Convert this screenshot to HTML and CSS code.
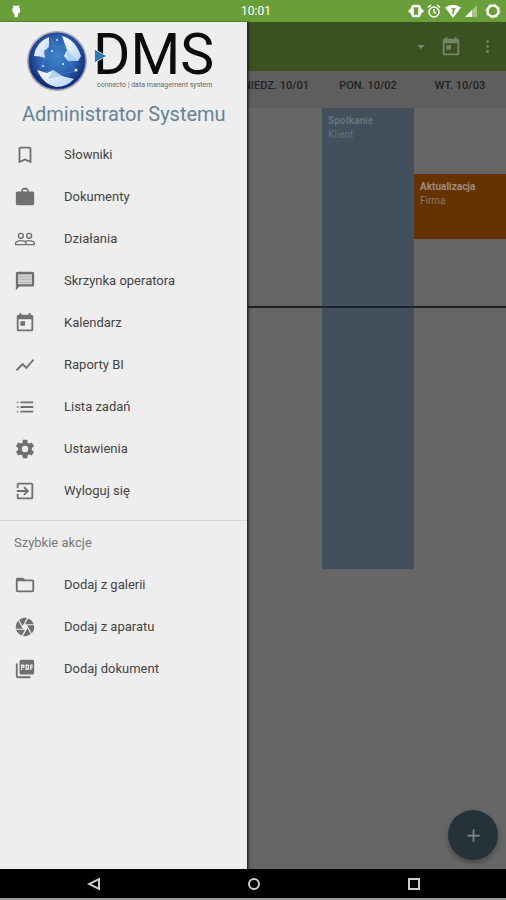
FILE: index.html
```html
<!DOCTYPE html>
<html lang="pl">
<head>
<meta charset="utf-8">
<meta name="viewport" content="width=device-width, initial-scale=1">
<title>DMS</title>
<link rel="stylesheet" href="styles.css">
</head>
<body>
<header class="status">
  <svg class="status-app" viewBox="0 0 12 16" aria-hidden="true"><path d="M3 3l-1-2 2 1h4l2-1-1 2q2 2 1.500 5Q10 11 8 11v4H4v-4Q2 11 1.500 8 1 5 3 3z"/></svg>
  <time class="clock">10:01</time>
  <div class="status-icons">
    <svg viewBox="0 0 16 16" aria-hidden="true"><rect x="4.500" y="3" width="7" height="10" rx="1" fill="none" stroke="#fff" stroke-width="2.500"/><path d="M4 4v8L0 8zM12 4v8l4-4z"/></svg>
    <svg viewBox="0 0 16 16" aria-hidden="true"><g fill="none" stroke="#fff" stroke-width="1.500"><circle cx="8" cy="9" r="5"/><path d="M8 6v3l2 1.500M2 4.500l3-2.500M14 4.500l-3-2.500"/></g></svg>
    <svg class="wifi" viewBox="0 0 18 16" aria-hidden="true"><path d="M1 4.500Q9-1 17 4.500L9 15z"/><path d="M7.500 6h3L9 8.500V11" fill="none" stroke="#689f38" stroke-width="1.500"/></svg>
    <svg viewBox="0 0 14 16" aria-hidden="true"><path d="M13 2v12H1z" opacity=".4"/><path d="M8 7v7H1z"/></svg>
    <svg class="ring" viewBox="0 0 16 16" aria-hidden="true"><circle cx="8" cy="8" r="5.500" fill="none" stroke="#fff" stroke-width="2.500"/><circle cx="8" cy="8" r="7" fill="none" stroke="#fff" stroke-width="1" stroke-dasharray="3 2.500" opacity=".6"/></svg>
  </div>
</header>

<div class="stage">
  <main class="calendar">
    <div class="toolbar">
      <button class="tool caret" aria-label="Widok"><svg viewBox="0 0 10 6"><path d="M1 1h8L5 5z"/></svg></button>
      <button class="tool" aria-label="Dzisiaj"><svg class="today" viewBox="0 0 24 24"><path d="M19 3h-1V1h-2v2H8V1H6v2H5a2 2 0 0 0-2 2v14a2 2 0 0 0 2 2h14a2 2 0 0 0 2-2V5a2 2 0 0 0-2-2zm0 16H5V8h14v11zM7 10h5v5H7z"/></svg></button>
      <button class="tool" aria-label="Menu"><svg class="more" viewBox="0 0 24 24"><circle cx="12" cy="5" r="2"/><circle cx="12" cy="12" r="2"/><circle cx="12" cy="19" r="2"/></svg></button>
    </div>
    <div class="days">
      <div class="day sunday">NIEDZ. 10/01</div>
      <div class="day">PON. 10/02</div>
      <div class="day">WT. 10/03</div>
    </div>
    <div class="slots">
      <article class="event meeting"><strong>Spotkanie</strong><span>Klient</span></article>
      <article class="event update"><strong>Aktualizacja</strong><span>Firma</span></article>
      <div class="now"></div>
    </div>
    <button class="fab" aria-label="Dodaj"><svg viewBox="0 0 24 24"><path d="M19 13h-6v6h-2v-6H5v-2h6V5h2v6h6z"/></svg></button>
  </main>

  <aside class="drawer">
    <div class="brand">
      <svg class="globe" viewBox="0 0 62 62" aria-hidden="true">
        <defs>
          <radialGradient id="sea" cx=".5" cy=".42" r=".58"><stop offset="0" stop-color="#3f86cb"/><stop offset=".6" stop-color="#2a5fae"/><stop offset="1" stop-color="#10206e"/></radialGradient>
          <linearGradient id="pane" x1="0" y1="0" x2="1" y2="1"><stop offset="0" stop-color="#fff"/><stop offset="1" stop-color="#b4d5f0"/></linearGradient>
        </defs>
        <circle cx="31" cy="31" r="30" fill="#a8a9b5"/>
        <circle cx="31" cy="31" r="28" fill="url(#sea)" stroke="#243f8e" stroke-width="1"/>
        <path d="M8 26Q10 12 23 7L23 17 18 21 19 28Q13 26 8 26z" fill="url(#pane)"/>
        <path d="M36 6Q49 9 55 26L52 31 42 31 38 26 41 20z" fill="url(#pane)"/>
        <path d="M11 40L21 43 27 40 36 46 48 49Q41 57 30 57 18 55 11 40z" fill="url(#pane)"/>
        <path d="M27 40l-5 9 14-3zM41 20l11 11-10 0z" fill="#8fbfe8" opacity=".55"/>
        <path d="M25 8l3 9 9-1 6 6-3 5 10 14-13 3-15-3-10 3 7-16z" fill="none" stroke="#72abdf" stroke-width="1" opacity=".3"/>
        <g fill="#d9ecfb"><circle cx="31" cy="10" r="1"/><circle cx="17" cy="36" r="1"/><circle cx="50" cy="40" r="1.500"/><circle cx="26" cy="21" r="1"/><circle cx="37" cy="34" r="1"/></g>
      </svg>
      <div class="wordmark">
        <span class="name">DMS</span>
        <svg class="pointer" viewBox="0 0 12 14" aria-hidden="true"><path d="M0 0v14l12-7z" fill="#eee"/><path d="M0 1v12l11-6z" fill="#2f74b5"/></svg>
        <span class="tagline">connecto | data management system</span>
      </div>
    </div>
    <h1 class="user">Administrator Systemu</h1>
    <nav>
      <ul class="menu">
        <li><a href="#"><svg viewBox="0 0 24 24"><path d="M17 3H7a2 2 0 0 0-2 2v16l7-3 7 3V5a2 2 0 0 0-2-2zm0 15l-5-2.200L7 18V5h10z"/></svg>Słowniki</a></li>
        <li><a href="#"><svg viewBox="0 0 24 24"><path d="M20 6h-4V4l-2-2h-4L8 4v2H4a2 2 0 0 0-2 2v11a2 2 0 0 0 2 2h16a2 2 0 0 0 2-2V8a2 2 0 0 0-2-2zm-6 0h-4V4h4z"/></svg>Dokumenty</a></li>
        <li><a href="#"><svg viewBox="0 0 24 24"><g fill="none" stroke="#707070" stroke-width="1.500"><circle cx="7.500" cy="8.500" r="2.700"/><circle cx="16.500" cy="8.500" r="2.700"/><path d="M1.800 18.200v-1.700c0-1.600 3.600-2.700 5.700-2.700s5.700 1.100 5.700 2.700v1.700zM11.500 14.600c1.500-.6 3.400-.8 5-.8 2.100 0 5.700 1.100 5.700 2.700v1.700h-9"/></g></svg>Działania</a></li>
        <li><a href="#"><svg viewBox="0 0 24 24"><path d="M4.500 4.500h15v11h-15z" opacity=".25"/><path d="M20 2H4a2 2 0 0 0-2 2v18l4-4h14a2 2 0 0 0 2-2V4a2 2 0 0 0-2-2zm0 14H5l-1 1V4h16z"/><path d="M3.500 3.500h17v13h-17z" fill="none" stroke="#707070" stroke-width="2"/><path d="M6 7h12v1H6zM6 10h12v1H6zM6 13h12v1H6z" opacity=".3"/></svg>Skrzynka operatora</a></li>
        <li><a href="#"><svg viewBox="0 0 24 24"><path d="M19 3h-1V1h-2v2H8V1H6v2H5a2 2 0 0 0-2 2v14a2 2 0 0 0 2 2h14a2 2 0 0 0 2-2V5a2 2 0 0 0-2-2zm0 16H5V8h14v11zM7 10h5v5H7z"/></svg>Kalendarz</a></li>
        <li><a href="#"><svg viewBox="0 0 24 24"><path d="M3.500 18.500l6-6 4 4L22 6.900l-1.400-1.400-7.100 8-4-4L2 17z"/></svg>Raporty BI</a></li>
        <li><a href="#"><svg viewBox="0 0 24 24"><path d="M7 6h14v2H7zM7 11h14v2H7zM7 16h14v2H7z"/><path d="M3 6h2v2H3zM3 11h2v2H3zM3 16h2v2H3z" opacity=".7"/></svg>Lista zadań</a></li>
        <li><a href="#"><svg viewBox="0 0 24 24"><path d="M19.430 12.980c.04-.32.070-.64.070-.98s-.03-.66-.07-.98l2.110-1.650c.19-.15.240-.42.120-.64l-2-3.460c-.12-.22-.39-.3-.61-.22l-2.490 1c-.52-.4-1.080-.73-1.690-.98l-.38-2.650A.49.490 0 0 0 14 2h-4c-.25 0-.46.180-.49.420l-.38 2.650c-.61.250-1.170.590-1.690.98l-2.490-1c-.23-.09-.49 0-.61.220l-2 3.460c-.13.220-.07.490.120.640l2.110 1.650c-.04.320-.07.650-.07.980s.03.660.070.980l-2.110 1.650c-.19.150-.24.420-.12.640l2 3.460c.12.220.390.300.610.220l2.490-1c.52.400 1.080.730 1.690.980l.38 2.650c.03.240.240.420.490.420h4c.25 0 .46-.18.490-.42l.38-2.650c.61-.25 1.170-.59 1.690-.98l2.490 1c.23.090.490 0 .610-.22l2-3.460c.12-.22.070-.49-.12-.64zM12 15.500a3.500 3.500 0 1 1 0-7 3.500 3.500 0 0 1 0 7z"/></svg>Ustawienia</a></li>
        <li><a href="#"><svg viewBox="0 0 24 24"><path d="M10.090 15.590L11.500 17l5-5-5-5-1.410 1.410L12.670 11H3v2h9.670zM19 3H5a2 2 0 0 0-2 2v4h2V5h14v14H5v-4H3v4a2 2 0 0 0 2 2h14a2 2 0 0 0 2-2V5a2 2 0 0 0-2-2z"/></svg>Wyloguj się</a></li>
      </ul>
      <h2 class="section">Szybkie akcje</h2>
      <ul class="menu">
        <li><a href="#"><svg viewBox="0 0 24 24"><path d="M20 6h-8l-2-2H4a2 2 0 0 0-2 2v12a2 2 0 0 0 2 2h16a2 2 0 0 0 2-2V8a2 2 0 0 0-2-2zm0 12H4V8h16z"/></svg>Dodaj z galerii</a></li>
        <li><a href="#"><svg viewBox="0 0 24 24"><path d="M9.400 10.500l4.770-8.260A10 10 0 0 0 5.640 4.300l3.660 6.350zM21.540 9c-.92-2.920-3.150-5.260-6-6.340L11.880 9zm.26 1h-7.490l.29.500 4.760 8.250A9.960 9.960 0 0 0 21.800 10zM8.540 12l-3.900-6.750A9.960 9.960 0 0 0 2.200 14h7.490zm-6.080 3c.92 2.920 3.150 5.260 6 6.340L12.120 15zm11.270 0l-3.900 6.760a10 10 0 0 0 8.530-2.060l-3.660-6.350z"/></svg>Dodaj z aparatu</a></li>
        <li><a href="#"><svg viewBox="0 0 24 24"><path d="M20 2H8a2 2 0 0 0-2 2v12a2 2 0 0 0 2 2h12a2 2 0 0 0 2-2V4a2 2 0 0 0-2-2zm-8.500 7.500A1.500 1.500 0 0 1 10 11H9v2H7.500V7H10a1.500 1.500 0 0 1 1.500 1.500zm5 2A1.500 1.500 0 0 1 15 13h-2.500V7H15a1.500 1.500 0 0 1 1.500 1.500zm4-3H19v1h1.500V11H19v2h-1.500V7h3zM9 9.500h1v-1H9zM4 6H2v14a2 2 0 0 0 2 2h14v-2H4zm10 5.500h1v-3h-1z"/></svg>Dodaj dokument</a></li>
      </ul>
    </nav>
  </aside>
</div>

<footer class="navbar">
  <button aria-label="Wstecz"><svg viewBox="0 0 14 14"><path d="M12 2v10L2 7z"/></svg></button>
  <button aria-label="Ekran główny"><svg viewBox="0 0 14 14"><circle cx="7" cy="7" r="5"/></svg></button>
  <button aria-label="Ostatnie"><svg viewBox="0 0 14 14"><rect x="2" y="2" width="10" height="10"/></svg></button>
</footer>
</body>
</html>
```
FILE: styles.css
```css
* { box-sizing: border-box; }

body {
  margin: 0;
  min-height: 100vh;
  display: flex;
  flex-direction: column;
  font-family: Roboto, "Noto Sans", sans-serif;
  font-size: 13px;
  background: #666;
}

button {
  margin: 0;
  padding: 0;
  border: 0;
  background: none;
  display: flex;
  align-items: center;
  justify-content: center;
}

svg { display: block; flex: none; }

/* Status bar */
.status {
  height: 22px;
  padding: 0 5px 0 11px;
  display: grid;
  grid-template-columns: 1fr auto 1fr;
  align-items: center;
  background: #689f38;
  color: #fff;
}
.status svg { height: 16px; fill: #fff; }
.status .status-app { height: 14px; justify-self: start; }
.clock { font-size: 12px; line-height: 22px; }
.status-icons {
  justify-self: end;
  display: flex;
  align-items: center;
  gap: 2px;
}
.status .ring { margin-left: 5px; }

/* Dimmed calendar behind the drawer */
.stage {
  position: relative;
  flex: 1;
  display: flex;
}
.calendar {
  position: relative;
  flex: 1;
  display: flex;
  flex-direction: column;
  background: #666;
}
.toolbar {
  height: 49px;
  padding-right: 7px;
  display: flex;
  align-items: center;
  justify-content: flex-end;
  gap: 12px;
  background: #3b5220;
}
.tool { width: 24px; height: 32px; }
.tool svg { fill: #78846a; }
.caret svg { width: 10px; }
.caret { margin-right: -6px; }
.today { width: 22px; }
.more { width: 17px; }
.days, .slots {
  display: grid;
  grid-template-columns: repeat(5, 1fr);
  padding-left: 46px;
}
.days {
  height: 37px;
  padding-top: 6px;
  background: #5e5e5e;
}
.day {
  font-size: 11px;
  line-height: 18px;
  font-weight: 500;
  text-align: center;
  white-space: nowrap;
  color: #222;
}
.sunday { grid-column: 3; }
.slots {
  position: relative;
  flex: 1;
  grid-auto-rows: 66px;
  background: repeating-linear-gradient(#666 0 65px, #626262 65px 66px);
}
.event {
  padding: 6px;
  display: flex;
  flex-direction: column;
  font-size: 10px;
  line-height: 14px;
}
.meeting {
  grid-column: 4;
  grid-row: 1 / span 7;
  margin-bottom: 1px;
  background: #41505c;
  color: #66727b;
}
.update {
  grid-column: 5;
  grid-row: 2;
  margin-bottom: 1px;
  background: #663300;
  color: #8a7764;
}
.update strong { color: #9a8d80; }
.now {
  position: absolute;
  top: 198px;
  left: 0;
  right: 0;
  height: 2px;
  background: #1f2326;
}
.fab {
  position: absolute;
  right: 8px;
  bottom: 9px;
  width: 50px;
  height: 50px;
  border-radius: 50%;
  background: #26323a;
  box-shadow: 0 3px 5px rgba(0, 0, 0, .3);
}
.fab svg { width: 21px; fill: #7d858a; }

/* Navigation drawer */
.drawer {
  position: absolute;
  top: 0;
  bottom: 0;
  left: 0;
  width: 49%;
  min-width: 247px;
  background: #eee;
  border-right: 1px solid #2c2c2c;
  box-shadow: 1px 0 2px rgba(0, 0, 0, .5);
}
.brand {
  height: 76px;
  padding: 8px 0 0 26px;
  display: flex;
  gap: 9px;
}
.globe { width: 62px; height: 62px; }
.wordmark {
  position: relative;
  display: flex;
  flex-direction: column;
  white-space: nowrap;
  color: #0b0b0b;
}
.name {
  font-size: 57px;
  line-height: 50px;
  margin-left: -4px;
}
.pointer {
  position: absolute;
  top: 19px;
  left: -2px;
  width: 12px;
}
.tagline {
  font-size: 7px;
  line-height: 10px;
  color: #666;
}
.user {
  margin: 0;
  height: 36px;
  padding-left: 22px;
  font-size: 20px;
  line-height: 32px;
  font-weight: 400;
  color: #648497;
  white-space: nowrap;
}
.menu {
  margin: 0;
  padding: 0;
  list-style: none;
}
.menu a {
  height: 42px;
  padding-left: 14px;
  display: flex;
  align-items: center;
  gap: 28px;
  color: #444;
  text-decoration: none;
  line-height: 20px;
}
.menu svg { width: 22px; fill: #707070; }
.section {
  margin: 8px 0 0;
  height: 44px;
  padding-left: 14px;
  border-top: 1px solid #d6d6d6;
  font-size: 13px;
  line-height: 44px;
  font-weight: 400;
  color: #777;
}

/* System navigation */
.navbar {
  height: 31px;
  padding: 0 12px 0 14px;
  display: grid;
  grid-template-columns: repeat(3, 1fr);
  background: #000;
  border-bottom: 2px solid #999;
}
.navbar svg {
  width: 14px;
  fill: none;
  stroke: #ccc;
  stroke-width: 2;
}
```
